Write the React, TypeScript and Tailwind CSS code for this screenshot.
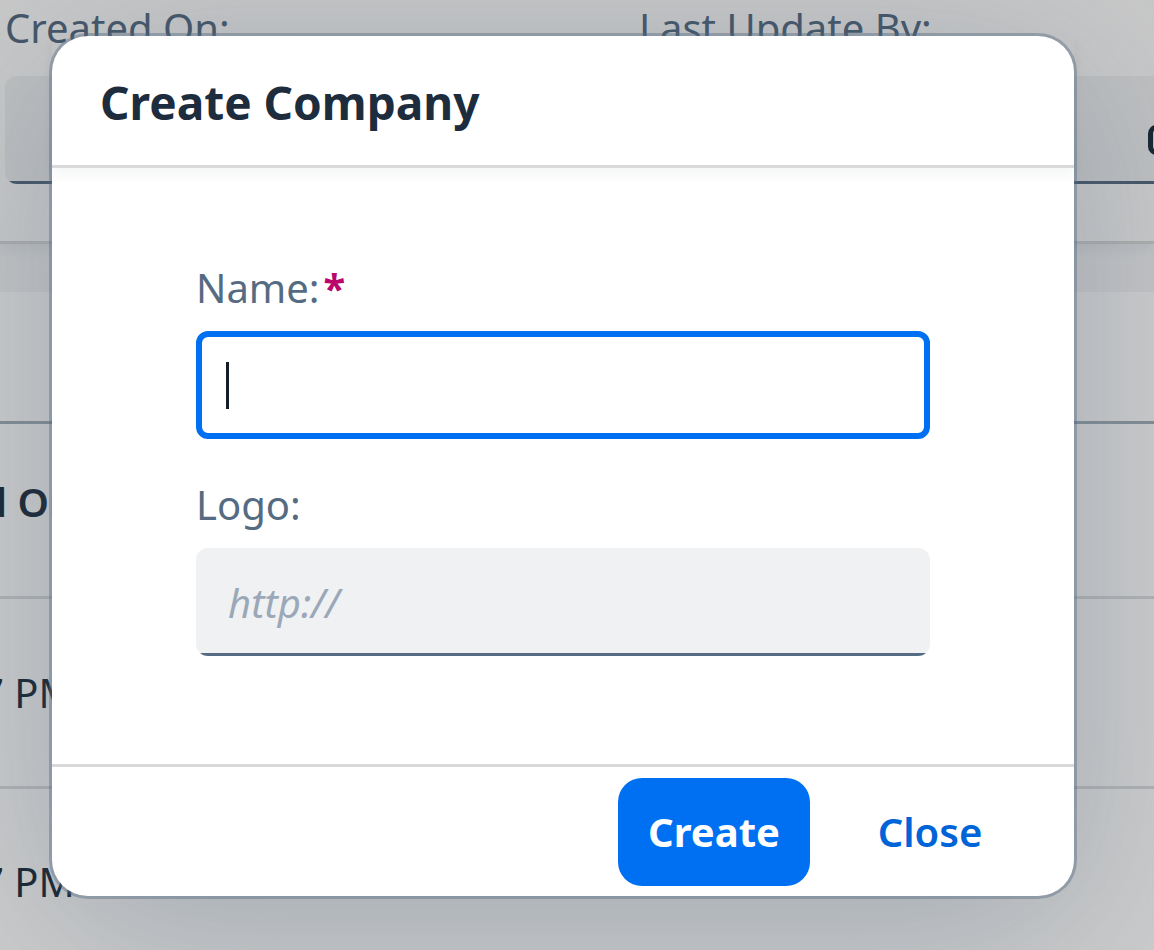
import type { ReactNode } from "react";

function FormField({ label, children }: { label: string; children?: ReactNode }) {
  return (
    <div className="min-w-0">
      <div className="text-[40px] leading-[56px] whitespace-nowrap text-[#556b82]">{label}</div>
      <div className="mt-5 flex h-[108px] items-center justify-end rounded-xl bg-[linear-gradient(to_top,#556b81_3px,#eff1f2_3px)]">
        {children}
      </div>
    </div>
  );
}

function ValueHelpIcon() {
  return (
    <svg width="36" height="42" viewBox="0 0 36 42" fill="none" stroke="#1d2d3e" strokeWidth="5" aria-hidden="true">
      <rect x="2.5" y="8.5" width="25" height="25" rx="6" />
      <path d="M12 2.5h15a6 6 0 0 1 6 6v17" />
    </svg>
  );
}

function BackgroundPage() {
  return (
    <main className="h-full overflow-hidden bg-[#f5f6f7]" aria-hidden="true">
      <section className="grid h-[244px] grid-cols-[606px_1fr] gap-x-7 border-b-[3px] border-[#d9d9d9] bg-[#fcfcfc] pl-[5px] shadow-[0_6px_12px_rgba(34,53,72,0.06)]">
        <FormField label="Created On:" />
        <div className="-mr-12">
          <FormField label="Last Update By:">
            <div className="mt-5 mr-[18px]">
              <ValueHelpIcon />
            </div>
          </FormField>
        </div>
      </section>
      <section className="mt-12 bg-white pt-[129px]">
        <table className="w-full border-collapse text-left text-[40px] leading-[56px] text-[#1d2d3e]">
          <thead>
            <tr className="h-[175px] border-t-[3px] border-b-[3px] border-t-[#a3afba] border-b-[#dedfe0]">
              <th className="whitespace-nowrap font-semibold">
                <div className="-mt-4 -ml-[18px]">d On</div>
              </th>
            </tr>
          </thead>
          <tbody>
            <tr className="h-[190px] border-b-[3px] border-[#dedfe0]">
              <td className="whitespace-nowrap">
                <div className="-ml-[19px]">7 PM</div>
              </td>
            </tr>
            <tr className="h-[187px]">
              <td className="whitespace-nowrap">
                <div className="-ml-[19px]">7 PM</div>
              </td>
            </tr>
          </tbody>
        </table>
      </section>
    </main>
  );
}

function CreateCompanyDialog() {
  return (
    <form
      role="dialog"
      aria-modal="true"
      aria-labelledby="dialog-title"
      onSubmit={(event) => event.preventDefault()}
      className="w-full rounded-[36px] bg-white shadow-[0_0_0_3px_rgba(85,107,130,0.42),0_30px_180px_rgba(85,107,130,0.36)]"
    >
      <header className="border-b-[3px] border-[#d9d9d9] px-12 pt-9 pb-8 shadow-[0_6px_12px_rgba(34,53,72,0.05)]">
        <h1 id="dialog-title" className="text-[46px] leading-[61px] font-bold text-[#1d2d3e]">
          Create Company
        </h1>
      </header>
      <div className="px-36 pt-[92px] pb-[108px]">
        <label htmlFor="name" className="block text-[40px] leading-[56px] text-[#556b82]">
          Name:
          <span className="ml-1 font-bold text-[#ba066c]">*</span>
        </label>
        <div className="relative mt-[15px]">
          <input
            id="name"
            type="text"
            required
            className="block h-[108px] w-full rounded-xl border-[6px] border-[#0070f2] bg-white px-6 text-[40px] text-[#131e29] caret-transparent outline-none"
          />
          <span className="absolute top-[31px] left-[30px] h-[47px] w-[3px] bg-[#131e29]" />
        </div>
        <label htmlFor="logo" className="mt-[38px] block text-[40px] leading-[56px] text-[#556b82]">
          Logo:
        </label>
        <input
          id="logo"
          type="text"
          placeholder="http://"
          className="mt-[15px] block h-[108px] w-full rounded-xl bg-[linear-gradient(to_top,#556b81_3px,#eff1f2_3px)] px-8 text-[40px] text-[#131e29] outline-none placeholder:text-[#9ba8b8] placeholder:italic"
        />
      </div>
      <footer className="flex justify-end gap-6 border-t-[3px] border-[#d9d9d9] px-12 pt-[11px] pb-[10px]">
        <button type="submit" className="h-[108px] w-48 rounded-3xl bg-[#0070f2] text-[40px] font-bold text-white">
          Create
        </button>
        <button type="button" className="h-[108px] w-48 rounded-3xl text-[40px] font-semibold text-[#0064d9]">
          Close
        </button>
      </footer>
    </form>
  );
}

export default function App() {
  return (
    <div className="relative h-screen overflow-hidden font-['Noto_Sans',sans-serif]">
      <BackgroundPage />
      <div className="absolute inset-0 bg-black/20 pt-9 pr-20 pl-[52px]">
        <CreateCompanyDialog />
      </div>
    </div>
  );
}
